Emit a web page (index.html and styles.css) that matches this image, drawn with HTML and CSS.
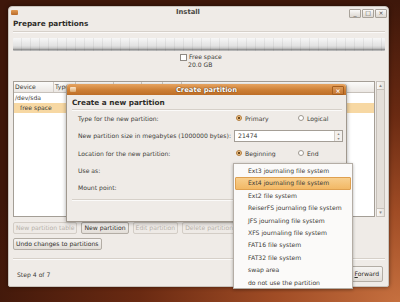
FILE: index.html
```html
<!DOCTYPE html>
<html lang="en">
<head>
    <meta charset="UTF-8">
    <title>Install</title>
    <link rel="stylesheet" href="styles.css">
</head>
<body>

<div class="window">
    <div class="titlebar">
        <span class="app-icon"></span>
        <span class="title">Install</span>
        <div class="controls">
            <span class="ctl">_</span>
            <span class="ctl">&#9633;</span>
            <span class="ctl">&#215;</span>
        </div>
    </div>

    <div class="content">
        <h1>Prepare partitions</h1>
        <div class="sep"></div>

        <div class="disk-bar"></div>
        <div class="legend">
            <div class="legend-row"><span class="check"></span>Free space</div>
            <div class="legend-size">20.0 GB</div>
        </div>

        <div class="table-wrap">
            <div class="table">
                <div class="thead">
                    <span class="col col-device">Device</span>
                    <span class="col col-type">Type</span>
                    <span class="col col-mount">Mount point</span>
                    <span class="col col-format">Format?</span>
                    <span class="col col-size">Size</span>
                    <span class="col col-used">Used</span>
                </div>
                <div class="row">/dev/sda</div>
                <div class="row row-child selected">free space</div>
            </div>
            <div class="scrollbar">
                <span class="arrow">&#9652;</span>
                <span class="trough"></span>
                <span class="arrow">&#9662;</span>
            </div>
        </div>

        <div class="btn-row">
            <span class="btn disabled">New partition table</span>
            <span class="btn">New partition</span>
            <span class="btn disabled">Edit partition</span>
            <span class="btn disabled">Delete partition</span>
        </div>
        <div class="btn-row undo">
            <span class="btn">Undo changes to partitions</span>
        </div>

        <div class="sep sep-bottom"></div>

        <div class="footer">
            <span class="step">Step 4 of 7</span>
            <span class="btn btn-forward"><u>F</u>orward</span>
        </div>
    </div>
</div>

<!-- modal dialog sitting over the installer window -->
<div class="dialog">
    <div class="dialog-title">
        <span class="dialog-icon"></span>
        <span>Create partition</span>
        <span class="dialog-close">&#215;</span>
    </div>
    <div class="dialog-body">
        <h2>Create a new partition</h2>
        <div class="sep"></div>
        <div class="form">
            <span>Type for the new partition:</span>
            <div class="radios">
                <span class="radio on">Primary</span>
                <span class="radio">Logical</span>
            </div>

            <span>New partition size in megabytes (1000000 bytes):</span>
            <div class="spin">
                <span>21474</span>
                <span class="spin-btns"><i>&#9652;</i><i>&#9662;</i></span>
            </div>

            <span>Location for the new partition:</span>
            <div class="radios">
                <span class="radio on">Beginning</span>
                <span class="radio">End</span>
            </div>

            <span>Use as:</span>
            <div></div>

            <span>Mount point:</span>
            <div></div>
        </div>
        <div class="sep"></div>
    </div>
</div>

<!-- open "Use as" combo popup -->
<div class="menu">
    <div class="item">Ext3 journaling file system</div>
    <div class="item active">Ext4 journaling file system</div>
    <div class="item">Ext2 file system</div>
    <div class="item">ReiserFS journaling file system</div>
    <div class="item">JFS journaling file system</div>
    <div class="item">XFS journaling file system</div>
    <div class="item">FAT16 file system</div>
    <div class="item">FAT32 file system</div>
    <div class="item">swap area</div>
    <div class="item">do not use the partition</div>
</div>

</body>
</html>
```
FILE: styles.css
```css
body {
    margin: 0;
    width: 400px;
    height: 302px;
    overflow: hidden;
    font-family: "DejaVu Sans", "Liberation Sans", sans-serif;
    font-size: 6.1px;
    color: #3c3b37;
    background: radial-gradient(ellipse 420px 300px at 100% 100%, #c6703f 0%, #a04c25 30%, #6a2a12 62%, #3e170a 100%);
}

.window {
    margin: 6px 0 0 8px;
    width: 381px;
    height: 281px;
    box-sizing: border-box;
    background-color: #efebe7;
    border: 1px solid #c9c3bc;
    border-radius: 4px 4px 2px 2px;
    box-shadow: 0 0 4px rgba(0, 0, 0, 0.5);
}

.titlebar {
    display: flex;
    align-items: center;
    height: 10px;
}

.app-icon {
    width: 7px;
    height: 5px;
    margin-left: 2px;
    margin-top: 1px;
    background: linear-gradient(#e39b52, #b86a2a);
    border-radius: 1px;
}

.title {
    margin-left: 158px;
    font-weight: bold;
    font-size: 6.8px;
    color: #4a4843;
}

.controls {
    display: flex;
    gap: 1px;
    margin-left: auto;
    margin-right: 1px;
    margin-top: 2px;
}

.ctl {
    width: 10px;
    height: 7px;
    border: 1px solid #a8a29a;
    border-radius: 1px;
    background: linear-gradient(#faf9f8, #dcd7d1);
    font-size: 6px;
    line-height: 6px;
    text-align: center;
    color: #4a4843;
}

.content {
    padding: 0 3px 0 4px;
}

h1 {
    margin: 2px 0 0 0;
    font-size: 7.3px;
    line-height: 10px;
    font-weight: bold;
    color: #2e2d2a;
}

.sep {
    height: 1px;
    margin-top: 2px;
    background-color: #d6d0c9;
    border-bottom: 1px solid #fbfaf9;
}

.disk-bar {
    margin-top: 5px;
    height: 13px;
    background:
        repeating-linear-gradient(90deg, transparent 0, transparent 8px, rgba(0, 0, 0, 0.06) 8px, rgba(0, 0, 0, 0.06) 9px),
        linear-gradient(#f7f7f7 0%, #e2e2e2 60%, #c9c9c9 78%, #8c8c8c 90%, #d0d0d0 100%);
    border-radius: 1px;
}

.legend {
    margin-top: 2px;
    padding-left: 167px;
    line-height: 8px;
    height: 16px;
}

.legend-row {
    display: flex;
    align-items: center;
}

.check {
    width: 5px;
    height: 5px;
    border: 1px solid #8f8a84;
    background: #fff;
    margin-right: 2px;
}

.legend-size {
    padding-left: 8px;
}

.table-wrap {
    display: flex;
    margin-top: 12px;
    height: 136px;
    gap: 1px;
}

.table {
    flex: 1;
    background: #fff;
    border: 1px solid #a49e96;
}

.thead {
    display: flex;
    height: 10px;
    line-height: 10px;
    background: linear-gradient(#fbfbfa, #ebe7e3);
    border-bottom: 1px solid #c7c1ba;
}

.col {
    padding-left: 1px;
    border-right: 1px solid #d3cdc6;
    white-space: nowrap;
    overflow: hidden;
}

.col-device { width: 38px; }
.col-type { width: 20px; }
.col-mount { width: 36px; }
.col-format { width: 26px; }
.col-size { width: 19px; }
.col-used { width: 17px; }

.row {
    height: 10px;
    line-height: 10px;
    padding-left: 1px;
}

.row-child {
    padding-left: 6px;
}

.selected {
    background-color: #f7d8a3;
}

.scrollbar {
    width: 7px;
    display: flex;
    flex-direction: column;
    border: 1px solid #c7c1ba;
    background: #e4dfd9;
}

.arrow {
    height: 7px;
    font-size: 5px;
    line-height: 7px;
    text-align: center;
    color: #8a857f;
    background: linear-gradient(90deg, #faf9f8, #e6e1db);
    border-bottom: 1px solid #c7c1ba;
}

.arrow:last-child {
    border-bottom: none;
    border-top: 1px solid #c7c1ba;
}

.trough {
    flex: 1;
}

.btn-row {
    display: flex;
    gap: 4px;
    margin-top: 5px;
}

.btn-row.undo {
    margin-top: 4px;
}

.btn {
    height: 10px;
    line-height: 10px;
    padding: 0 2px;
    border: 1px solid #b3ada5;
    border-radius: 2px;
    background: linear-gradient(#f6f4f2, #e2ddd7);
    white-space: nowrap;
    color: #2e2d2a;
}

.btn.disabled {
    color: #b7b1aa;
    border-color: #d3cdc6;
    background: #eeeae6;
}

.sep-bottom {
    margin-top: 8px;
}

.footer {
    display: flex;
    align-items: center;
    height: 28px;
    padding-left: 4px;
}

.btn-forward {
    margin-left: auto;
    margin-right: 2px;
    height: 14px;
    line-height: 14px;
    padding: 0 3px 0 20px;
}

/* dialog */

.dialog {
    position: absolute;
    left: 66px;
    top: 84px;
    width: 281px;
    height: 138px;
    box-sizing: border-box;
    background-color: #efebe7;
    border: 1px solid #a0988e;
    border-top: none;
    border-radius: 3px 3px 1px 1px;
    box-shadow: 0 1px 4px rgba(0, 0, 0, 0.35);
}

.dialog-title {
    display: flex;
    align-items: center;
    justify-content: center;
    position: relative;
    height: 11px;
    border-radius: 3px 3px 0 0;
    background: linear-gradient(#e6a461, #cd7f35 55%, #bd6e27);
    color: #fff;
    font-weight: bold;
    font-size: 6.8px;
    text-shadow: 0 0 1px #5a3210, 0 0 1px #5a3210;
}

.dialog-icon {
    position: absolute;
    left: 3px;
    top: 3px;
    width: 6px;
    height: 5px;
    background: linear-gradient(#fbe6cc, #d9a66b);
    border-radius: 1px;
}

.dialog-close {
    position: absolute;
    right: 2px;
    top: 2px;
    width: 10px;
    height: 7px;
    line-height: 7px;
    text-align: center;
    font-size: 6px;
    border: 1px solid #a45d1e;
    border-radius: 1px;
    background: linear-gradient(#dd9a58, #c47631);
    text-shadow: none;
}

.dialog-body {
    padding: 0 4px 0 5px;
}

h2 {
    margin: 3px 0 0 0;
    font-size: 7.3px;
    line-height: 10px;
    font-weight: bold;
    color: #2e2d2a;
}

.dialog-body .sep {
    margin-top: 1px;
}

.form {
    display: grid;
    grid-template-columns: 156px 1fr;
    grid-template-rows: 12px 13px 12px 12px 12px;
    row-gap: 5px;
    align-items: center;
    padding-left: 6px;
    margin-top: 1px;
    margin-bottom: 6px;
    white-space: nowrap;
}

.radios {
    display: flex;
}

.radio {
    display: flex;
    align-items: center;
    width: 60px;
    padding-left: 2px;
}

.radio::before {
    content: '';
    width: 4px;
    height: 4px;
    margin-right: 3px;
    border: 1px solid #9d978f;
    border-radius: 50%;
    background: #fff;
}

.radio.on::before {
    background: radial-gradient(circle, #6b4a22 0, #6b4a22 1.2px, #f3c68a 1.6px);
    border-color: #b27b3a;
}

.spin {
    display: flex;
    align-items: center;
    justify-content: space-between;
    width: 109px;
    height: 12px;
    box-sizing: border-box;
    padding-left: 3px;
    background: #fff;
    border: 1px solid #a49e96;
}

.spin-btns {
    display: flex;
    flex-direction: column;
    width: 7px;
    height: 100%;
    border-left: 1px solid #d3cdc6;
    background: #f3f0ed;
}

.spin-btns i {
    flex: 1;
    font-style: normal;
    font-size: 4px;
    line-height: 5px;
    text-align: center;
    color: #8a857f;
}

/* combo popup */

.menu {
    position: absolute;
    left: 233px;
    top: 163px;
    width: 120px;
    height: 126px;
    box-sizing: border-box;
    padding: 1px;
    background: #fbfaf9;
    border: 1px solid #b4ada5;
    box-shadow: 0 1px 3px rgba(0, 0, 0, 0.3);
}

.item {
    height: 12.4px;
    line-height: 12.4px;
    padding-left: 13px;
    white-space: nowrap;
}

.item.active {
    background: linear-gradient(#f8cf8e, #f2b865);
    border: 1px solid #dfa04f;
    border-radius: 1px;
    height: 10.4px;
    line-height: 10.4px;
    padding-left: 12px;
}
```
